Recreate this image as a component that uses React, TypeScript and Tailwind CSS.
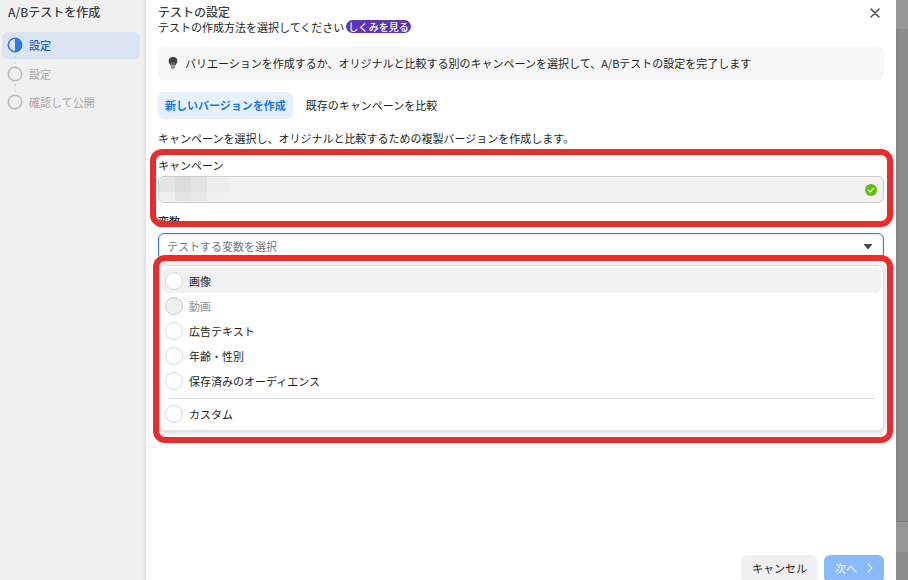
import React, { useState } from 'react';

const steps = [
  { label: '設定', active: true },
  { label: '設定', active: false },
  { label: '確認して公開', active: false },
];

const variables = [
  { id: 'image', label: '画像', disabled: false },
  { id: 'video', label: '動画', disabled: true },
  { id: 'text', label: '広告テキスト', disabled: false },
  { id: 'age', label: '年齢・性別', disabled: false },
  { id: 'audience', label: '保存済みのオーディエンス', disabled: false },
];

const StepIcon = ({ active }: { active: boolean }) => (
  <svg className="w-4 h-4 shrink-0" viewBox="0 0 16 16" aria-hidden="true">
    <circle cx="8" cy="8" r="6.7" fill="none" stroke={active ? '#3578e5' : '#b9bbc0'} strokeWidth="1.5" />
    {active && <path d="M8 1.3a6.7 6.7 0 0 1 0 13.4z" fill="#3578e5" />}
  </svg>
);

const StepDots = () => (
  <svg className="absolute left-[13px] top-[22px] w-1 h-3" viewBox="0 0 4 12" aria-hidden="true">
    <circle cx="2" cy="3" r="1.3" fill="#cfd1d5" />
    <circle cx="2" cy="9" r="1.3" fill="#dfe0e3" />
  </svg>
);

const Sidebar = () => (
  <nav className="w-[146px] shrink-0 bg-[#f0f0f0] pt-1 shadow-[inset_-3px_0_3px_-2px_#d8d8d8]">
    <h1 className="pl-2 text-[12px] leading-4 font-medium text-[#3a3d42]">A/Bテストを作成</h1>
    <ol className="mt-3 flex flex-col gap-px">
      {steps.map((step, index) => (
        <li key={index} className="relative pl-0.5 pr-1.5">
          <a
            href="#"
            className={
              step.active
                ? 'flex items-center gap-1.5 h-[27px] rounded-md pl-[5px] pb-0.5 bg-[#dbe5f1] text-[#1461cc] font-medium'
                : 'flex items-center gap-1.5 h-[27px] rounded-md pl-[5px] text-[#a5a7ab]'
            }
          >
            <StepIcon active={step.active} />
            {step.label}
          </a>
          {index < steps.length - 1 && <StepDots />}
        </li>
      ))}
    </ol>
  </nav>
);

const radioClass =
  'appearance-none w-[18px] h-[18px] shrink-0 rounded-full border border-[#d4d6d9] bg-white checked:border-[5px] checked:border-[#1877f2] disabled:bg-[#f0f0f0] disabled:border-[#cbcdd0]';

const VariableMenu = ({ value, onChange }: { value: string; onChange: (id: string) => void }) => (
  <div
    role="radiogroup"
    aria-label="変数"
    className="absolute left-px right-0 top-full mt-[5px] rounded-md bg-white border border-[#e2e3e5] px-0.5 pt-0.5 pb-1 shadow-[0_1px_6px_2px_#dddddd]"
  >
    <div className="flex flex-col">
      {variables.map((item, index) => (
        <label
          key={item.id}
          className={
            index === 0
              ? 'flex items-center gap-1.5 h-[25px] rounded-md px-[3px] bg-[#f1f1f1]'
              : item.disabled
                ? 'flex items-center gap-1.5 h-[25px] rounded-md px-[3px] text-[#8f9195]'
                : 'flex items-center gap-1.5 h-[25px] rounded-md px-[3px]'
          }
        >
          <input
            type="radio"
            name="variable"
            className={radioClass}
            disabled={item.disabled}
            checked={value === item.id}
            onChange={() => onChange(item.id)}
          />
          {item.label}
        </label>
      ))}
    </div>
    <hr className="mx-1.5 mt-[5px] mb-0.5 border-[#dadbdf]" />
    <label className="flex items-center gap-1.5 h-[25px] px-[3px]">
      <input
        type="radio"
        name="variable"
        className={radioClass}
        checked={value === 'custom'}
        onChange={() => onChange('custom')}
      />
      カスタム
    </label>
  </div>
);

// Pixelated campaign name
const Mosaic = () => (
  <div className="absolute left-px top-px grid grid-cols-[16px_16px_16px_24px] grid-rows-[15px_9px] rounded-lg overflow-hidden" aria-hidden="true">
    <div className="bg-[#e5e5e5]" />
    <div className="bg-[#dcdcdc]" />
    <div className="bg-[#e3e3e3]" />
    <div className="bg-[#eeeeee]" />
    <div className="bg-[#efefef]" />
    <div className="bg-[#e4e4e4]" />
    <div className="bg-[#e8e8e8]" />
    <div className="bg-[#f0f0f0]" />
  </div>
);

const App = () => {
  const [variable, setVariable] = useState('');

  return (
    <div className="relative flex h-screen overflow-hidden bg-white text-[11px] leading-4 text-[#1c1e21] font-['Noto_Sans_CJK_JP',sans-serif]">
      <Sidebar />

      <main className="flex flex-col flex-1 min-w-0 pl-3 pr-3">
        <header className="flex justify-between pt-1">
          <div>
            <h2 className="text-[12px] leading-[15px] font-medium text-[#3a3d42]">テストの設定</h2>
            <div className="flex items-center gap-0.5 h-[15px]">
              <p>テストの作成方法を選択してください</p>
              <a href="#" className="flex items-center h-[13px] rounded-full bg-[#5b36b9] px-0.5 text-[10px] font-medium text-white">
                しくみを見る
              </a>
            </div>
          </div>
          <button type="button" aria-label="閉じる" className="flex items-center justify-center w-[18px] h-[18px]">
            <svg className="w-[10px] h-[10px]" viewBox="0 0 10 10" fill="none" stroke="#444950" strokeWidth="1.5" strokeLinecap="round">
              <path d="M1 1l8 8M9 1L1 9" />
            </svg>
          </button>
        </header>

        <div className="flex items-center gap-[7px] mt-[13px] h-[33px] shrink-0 rounded-md bg-[#f6f6f6] pl-2.5 pb-0.5">
          <svg className="w-[10px] h-3 shrink-0" viewBox="0 0 10 12" aria-hidden="true">
            <path d="M5 0a4.4 4.4 0 0 0-4.4 4.3c0 1.8 1.5 2.6 1.9 4.2h5c.4-1.6 1.9-2.4 1.9-4.2A4.4 4.4 0 0 0 5 0z" fill="#3f4247" />
            <path d="M3.8 8.5V5.3M6.2 8.5V5.3" stroke="#aaa" strokeWidth=".8" />
            <path d="M3 9h4v1.6c0 .8-.8 1.4-2 1.4s-2-.6-2-1.4z" fill="#909295" />
          </svg>
          <p>バリエーションを作成するか、オリジナルと比較する別のキャンペーンを選択して、A/Bテストの設定を完了します</p>
        </div>

        <div className="flex gap-1.5 mt-3">
          <button type="button" className="h-[27px] rounded-md bg-[#e7f1fe] px-[7px] pb-0.5 font-bold text-[#1877f2]">
            新しいバージョンを作成
          </button>
          <button type="button" className="h-[27px] rounded-md px-[7px] pb-0.5">
            既存のキャンペーンを比較
          </button>
        </div>

        <p className="mt-[11px]">キャンペーンを選択し、オリジナルと比較するための複製バージョンを作成します。</p>

        <label htmlFor="campaign" className="mt-[11px]">キャンペーン</label>
        <div className="relative mt-[3px]">
          <input id="campaign" readOnly className="block w-full h-[27px] rounded-md border border-[#cccccc] bg-[#f1f1f1] px-2" />
          <Mosaic />
          <svg className="absolute right-[7px] top-[8px] w-3 h-3" viewBox="0 0 12 12" aria-hidden="true">
            <circle cx="6" cy="6" r="6" fill="#63be09" />
            <path d="M3.3 6.2l1.9 1.8 3.5-3.6" fill="none" stroke="#e8f6da" strokeWidth="1.2" strokeLinecap="round" strokeLinejoin="round" />
          </svg>
        </div>

        <label htmlFor="variable" className="mt-2.5 font-medium">変数</label>
        <div className="relative mt-1">
          <select
            id="variable"
            value={variable}
            onChange={(e) => setVariable(e.target.value)}
            className="block appearance-none w-full h-[27px] rounded-md border border-[#3578e5] bg-white pl-2 pr-7 pb-0.5 text-[#73767b] shadow-[inset_0_0_0_1px_#e3edfd]"
          >
            <option value="">テストする変数を選択</option>
            {variables.map((item) => (
              <option key={item.id} value={item.id} disabled={item.disabled}>{item.label}</option>
            ))}
            <option value="custom">カスタム</option>
          </select>
          <svg className="absolute right-3 top-[11px] w-2 h-[5px] pointer-events-none" viewBox="0 0 8 5" aria-hidden="true">
            <path d="M.6 0h6.8a.5.5 0 0 1 .4.9L4.6 4.7a.8.8 0 0 1-1.2 0L.2.9A.5.5 0 0 1 .6 0z" fill="#444950" />
          </svg>
          <VariableMenu value={variable} onChange={setVariable} />
        </div>

        <footer className="flex justify-end gap-1.5 mt-auto h-[25px] shrink-0">
          <button type="button" className="h-7 rounded-md bg-[#f0f0f0] px-[11px] pb-0.5">キャンセル</button>
          <button type="button" className="flex items-center gap-2.5 h-7 rounded-md bg-[#8bbafa] px-[11px] pb-0.5 font-medium text-[#e3effe]">
            次へ
            <svg className="w-1.5 h-[10px]" viewBox="0 0 6 10" fill="none" stroke="#dbeafe" strokeWidth="1.2" strokeLinecap="round" strokeLinejoin="round">
              <path d="M1 .8L5 5 1 9.2" />
            </svg>
          </button>
        </footer>
      </main>

      {/* dimmed page behind the dialog */}
      <div className="flex flex-col w-3 shrink-0 bg-[#8c8c8c] shadow-[inset_3px_0_3px_-1px_#848484]">
        <div className="h-[29px] bg-[#979797]" />
        <div className="flex-1" />
        <div className="h-[31px] border-t border-[#7c7c7c] bg-[#979797]" />
        <div className="h-7 rounded-tr-md bg-[#8c8c8c]" />
      </div>

      {/* highlight frames */}
      <div className="absolute left-[150px] right-[15px] top-[149px] h-[78px] rounded-xl border-[6px] border-[#ee2b2b] pointer-events-none" />
      <div className="absolute left-[153px] right-[15px] top-[255px] h-[188px] rounded-xl border-[6px] border-[#ee2b2b] pointer-events-none" />
    </div>
  );
};

export default App;
